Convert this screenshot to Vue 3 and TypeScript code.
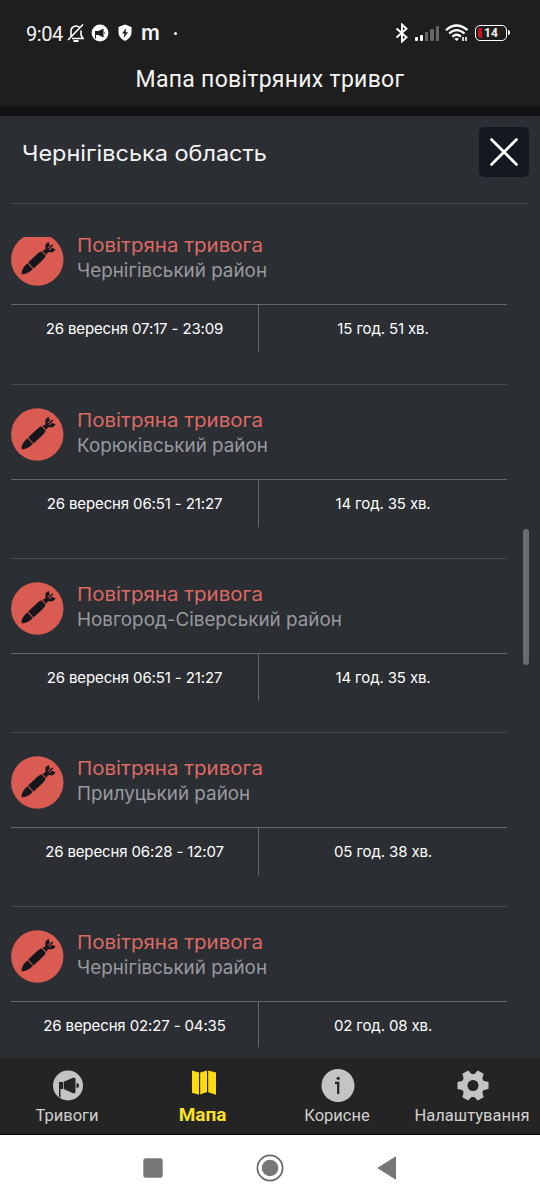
<script setup lang="ts">
interface Alert {
  district: string
  period: string
  duration: string
}

const alerts: Alert[] = [
  { district: 'Чернігівський район', period: '26 вересня 07:17 - 23:09', duration: '15 год. 51 хв.' },
  { district: 'Корюківський район', period: '26 вересня 06:51 - 21:27', duration: '14 год. 35 хв.' },
  { district: 'Новгород-Сіверський район', period: '26 вересня 06:51 - 21:27', duration: '14 год. 35 хв.' },
  { district: 'Прилуцький район', period: '26 вересня 06:28 - 12:07', duration: '05 год. 38 хв.' },
  { district: 'Чернігівський район', period: '26 вересня 02:27 - 04:35', duration: '02 год. 08 хв.' },
]

const signalBars: number[] = [4, 6, 9, 12, 15]
</script>

<template>
  <div class="screen">
    <div class="status">
      <span class="clock">9:04</span>
      <svg class="st-bell" width="18" height="20" viewBox="0 0 18 20" fill="none" stroke="#fff" stroke-width="1.6">
        <path d="M4 14V8.500A5 5 0 0 1 12.500 4.500M14 7.500V12L16 15.500H5M1 17L16 1.500" />
        <path d="M6.500 18h5" stroke-width="2" />
      </svg>
      <svg class="st-horn" width="18" height="18" viewBox="0 0 18 18">
        <circle cx="9" cy="9" r="8.400" fill="#fff" />
        <path d="M4 7h3.500L12.500 4.500v9L7.500 11H5v3.500H4zM13.300 7.500q1.500 1.500 0 3z" fill="#1e1e1e" />
      </svg>
      <svg class="st-shield" width="16" height="18" viewBox="0 0 16 18">
        <path d="M8 .5L14.500 3v5.500q0 5.500-6.500 8.500Q1.500 14 1.500 8.500V3z" fill="#fff" />
        <path d="M9.300 4L5 9.500h2.500L6.700 14 11 8.300H8.500z" fill="#1e1e1e" />
      </svg>
      <span class="st-m">m</span>
      <span class="st-dot"></span>
      <span class="spacer"></span>
      <svg class="st-bt" width="14" height="20" viewBox="0 0 14 20" fill="none" stroke="#fff" stroke-width="1.900">
        <path d="M1.500 5.500L11.500 14.200 7 18.500V1.500L11.500 5.800 1.500 14.500" />
      </svg>
      <span class="signal">
        <i v-for="(h, i) in signalBars" :key="i" :class="{ on: i < 2 }" :style="{ height: h + 'px' }"></i>
      </span>
      <svg class="st-wifi" width="24" height="18" viewBox="0 0 24 18" fill="none" stroke="#fff" stroke-width="2.2">
        <path d="M1 6.200Q11.500-3.200 22.500 6.200M4.200 9.500Q11.500 2.800 19.500 9.500M7.300 12.700Q11.500 8.800 16 12.700" />
        <path d="M11.700 17L9.300 14.800Q11.700 13 14 14.800z" fill="#fff" stroke="none" />
        <path d="M18 13v4M21 13v4" stroke-width="1.600" />
      </svg>
      <span class="battery"><b></b><em>14</em></span>
    </div>
    <h1 class="app-title">Мапа повітряних тривог</h1>

    <main class="panel">
      <header class="region">
        <h2>Чернігівська область</h2>
        <button class="close" aria-label="Закрити">
          <svg width="50" height="50" viewBox="0 0 50 50" stroke="#fff" stroke-width="2.700" stroke-linecap="round">
            <path d="M12.500 12.500L37.500 37.500M37.500 12.500L12.500 37.500" />
          </svg>
        </button>
      </header>
      <div class="viewport">
        <div class="list">
          <article v-for="(a, i) in alerts" :key="i" class="alert">
            <div class="head">
              <svg class="bomb" width="53" height="53" viewBox="0 0 53 53">
                <circle cx="26.300" cy="26.500" r="26.200" fill="#d95b51" />
                <g transform="translate(10.700 41) rotate(-43)" fill="#15171c">
                  <path d="M0 0C1.500-2.700 6-4 11.500-4V4C6 4 1.500 2.700 0 0z" />
                  <path d="M12.500-4H25Q28-4 30-3V3Q28 4 25 4H12.500z" />
                  <path d="M31-2.800L34-1.800 37.500-5.300H41.500L40-1.500H36.500V-.7H42.500V.7H36.500V1.500H40L41.500 5.300H37.500L34 1.800 31 2.800z" />
                </g>
              </svg>
              <div class="names">
                <div class="kind">Повітряна тривога</div>
                <div class="district">{{ a.district }}</div>
              </div>
            </div>
            <div class="times">
              <div class="cell">{{ a.period }}</div>
              <div class="cell duration">{{ a.duration }}</div>
            </div>
          </article>
        </div>
        <span class="thumb"></span>
      </div>
    </main>

    <nav class="tabs">
      <div class="tab">
        <svg width="34" height="34" viewBox="0 0 34 34">
          <circle cx="17" cy="17.500" r="15" fill="#c4c4c4" />
          <path d="M8 14h4v7H9.500v9L8 28.500zM12.700 13.800l9.300-4h1.500l1 .7v14l-1 .7H22L12.700 21zM25.500 15q2.500 0 2.500 2.500t-2.500 2.500z" fill="#242424" />
        </svg>
        <span>Тривоги</span>
      </div>
      <div class="tab active">
        <svg width="34" height="34" viewBox="0 0 34 34" fill="#fddb12">
          <path d="M6 2.500L13 4.500v22.300L6 24.800zM14.200 4.500L21 2.500v21.500L14.200 26.500zM22.200 2.500L30 4.500v22.300l-7.800-2.500z" />
        </svg>
        <span>Мапа</span>
      </div>
      <div class="tab">
        <svg width="34" height="34" viewBox="0 0 34 34">
          <circle cx="17" cy="17.500" r="16.500" fill="#c4c4c4" />
          <circle cx="17.200" cy="10.300" r="1.600" fill="#242424" />
          <path d="M14 14.800h3.200V26" fill="none" stroke="#242424" stroke-width="2.200" />
        </svg>
        <span>Корисне</span>
      </div>
      <div class="tab">
        <svg width="34" height="34" viewBox="0 0 34 34">
          <g fill="#c4c4c4" transform="translate(17 17.500)">
            <circle r="11.500" />
            <path v-for="n in 6" :key="n" :transform="`rotate(${n * 60 + 30})`" d="M-5-9L-3.400-15.500H3.400L5-9z" />
            <circle r="5.500" fill="#242424" />
          </g>
        </svg>
        <span>Налаштування</span>
      </div>
    </nav>

    <footer class="system">
      <svg width="20" height="20" viewBox="0 0 20 20"><rect x=".3" y=".3" width="19.400" height="19.400" rx="2.500" fill="#777" /></svg>
      <svg width="28" height="28" viewBox="0 0 28 28">
        <circle cx="14" cy="14" r="12.600" fill="none" stroke="#666" stroke-width="1.700" />
        <circle cx="14" cy="14" r="8.300" fill="#777" />
      </svg>
      <svg width="20" height="24" viewBox="0 0 20 24"><path d="M1 12L18.500 1v22z" fill="#777" stroke="#777" stroke-linejoin="round" /></svg>
    </footer>
  </div>
</template>

<style>
body { margin: 0; background: #fff; }
</style>

<style scoped>
.screen {
  width: 540px;
  height: 1200px;
  display: flex;
  flex-direction: column;
  overflow: hidden;
  background: #1e1e1e;
  color: #f4f4f4;
  font-family: Inter, "Noto Sans", sans-serif;
}
.status {
  display: flex;
  align-items: center;
  height: 66px;
  flex: none;
  box-sizing: border-box;
  padding: 0 33px 0 26px;
  font-family: Roboto, sans-serif;
}
.clock { width: 41px; font-size: 20px; letter-spacing: -0.4px; padding-top: 2px; }
.st-horn { margin-left: 6px; }
.st-shield { margin-left: 8px; }
.st-m { margin: -1px 0 0 8px; font: 600 21px/24px Inter, sans-serif; width: 18px; }
.st-dot { width: 3px; height: 3px; border-radius: 50%; background: #fff; margin-left: 15px; }
.spacer { flex: 1; }
.signal { display: flex; align-items: flex-end; gap: 2px; height: 16px; margin: 0 6px 0 6px; }
.signal i { width: 3.300px; border-radius: 1px; background: #666; }
.signal i.on { background: #fff; }
.battery {
  position: relative;
  box-sizing: border-box;
  width: 32px;
  height: 16px;
  margin-left: 6px;
  border: 1.500px solid #fff;
  border-radius: 5px;
  display: flex;
  align-items: center;
}
.battery::after {
  content: "";
  position: absolute;
  right: -4px;
  top: 4px;
  width: 2px;
  height: 5px;
  background: #fff;
  border-radius: 0 2px 2px 0;
}
.battery b { width: 4px; height: 10px; margin-left: 2px; background: #c5161d; border-radius: 2px 0 0 2px; }
.battery em { font: 700 12px/12px Roboto, sans-serif; margin-left: 2px; }
.app-title {
  flex: none;
  height: 40px;
  margin: 0;
  font: 400 23px/28px Roboto, sans-serif;
  letter-spacing: .28px;
  text-align: center;
}
.panel {
  flex: none;
  height: 952px;
  box-sizing: border-box;
  border-top: 10px solid #131313;
  background: #2b2e33;
}
.region {
  display: flex;
  justify-content: space-between;
  box-sizing: border-box;
  height: 88px;
  margin: 0 11px;
  padding: 11px 0 0 11px;
  border-bottom: 1px solid #484b4f;
}
.region h2 {
  margin: 0;
  font-size: 22px;
  font-weight: 400;
  line-height: 53px;
  transform: scaleX(1.066);
  transform-origin: left;
}
.close { width: 50px; height: 50px; padding: 0; border: 0; border-radius: 5px; background: #131820; }
.close svg { display: block; }
.viewport { position: relative; height: 810px; margin-top: 33px; overflow: hidden; }
.list { margin: -27.800px 33px 0 11px; }
.alert { height: 174.300px; box-sizing: border-box; border-top: 1px solid #484b4f; }
.head { display: flex; height: 95px; box-sizing: border-box; padding-top: 23px; border-bottom: 1px solid #65686b; }
.bomb { flex: none; }
.names { margin-left: 13px; font-size: 18.500px; line-height: 25px; white-space: nowrap; }
.kind { width: max-content; color: #dc6a63; transform: scaleX(1.107); transform-origin: left; }
.district { width: max-content; color: #989b9f; transform: scaleX(1.018); transform-origin: left; }
.times { display: flex; height: 47px; font-size: 15px; line-height: 47px; letter-spacing: -.13px; color: #fff; }
.cell { width: 247px; text-align: center; white-space: nowrap; }
.duration { border-left: 1px solid #65686b; width: 248px; }
.thumb {
  position: absolute;
  right: 11px;
  top: 292px;
  width: 6px;
  height: 136px;
  border-radius: 3px;
  background: #696c70;
}
.tabs {
  flex: none;
  display: flex;
  height: 77px;
  box-sizing: border-box;
  padding-top: 10px;
  border-bottom: 1px solid #000;
  background: #242424;
  font: 400 16.500px/24px Roboto, sans-serif;
  color: #d0d0d0;
}
.tab { width: 135px; display: flex; flex-direction: column; align-items: center; }
.tab span { margin: 2px 1px 0 0; }
.tab.active span { margin: 1px 0 0; font-weight: 700; font-size: 19px; color: #fbe122; }
.system { flex: 1; display: flex; align-items: center; justify-content: center; gap: 93px; padding-right: 1px; background: #fff; }
</style>
